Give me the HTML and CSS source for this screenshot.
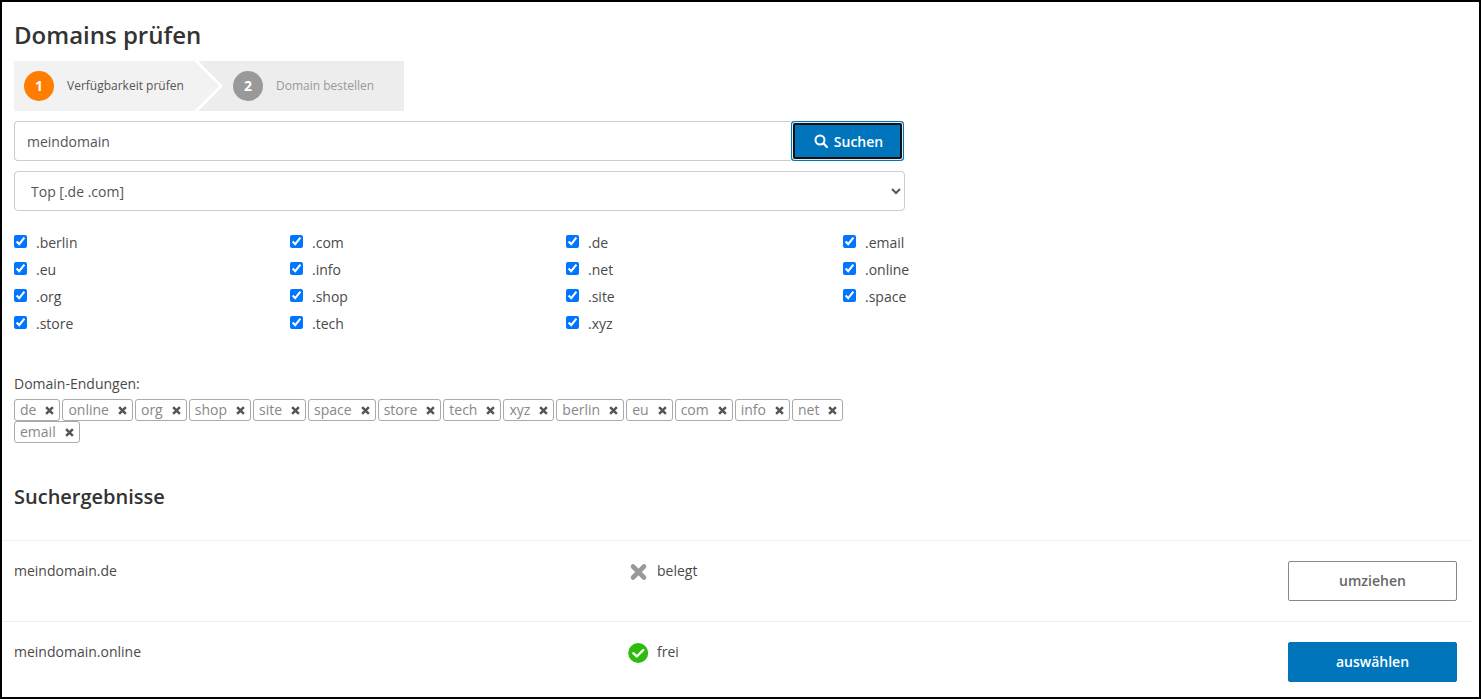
FILE: index.html
```html
<!DOCTYPE html>
<html lang="de">
<head>
<meta charset="utf-8">
<title>Domains prüfen</title>
<link rel="stylesheet" href="styles.css">
</head>
<body>
<main class="page">
  <div class="inner">
    <h1 class="title">Domains prüfen</h1>
    <div class="steps">
      <div class="step step-active"><span class="num num-orange">1</span><span class="step-label">Verfügbarkeit prüfen</span></div>
      <div class="step step-next"><span class="num num-grey">2</span><span class="step-label">Domain bestellen</span></div>
      <svg class="chevron" width="30" height="50" viewBox="0 0 30 50"><path d="M0 0 L25 25 L0 50 Z" fill="#f2f2f2"/><path d="M0 0 L4.500 0 L29 25 L4.500 50 L0 50 L25 25 Z" fill="#fff"/></svg>
    </div>
    <div class="search">
      <input class="search-input" type="text" value="meindomain">
      <button class="search-btn" type="button">
        <svg width="14" height="14" viewBox="0 0 14 14"><circle cx="6" cy="6" r="4.500" fill="none" stroke="#fff" stroke-width="2"/><path d="M9.300 9.300 L13 13" stroke="#fff" stroke-width="2.200" stroke-linecap="round"/></svg>
        Suchen
      </button>
    </div>
    <select class="tld-select"><option>Top [.de .com]</option></select>
    <div class="checks">
      <label class="check"><input type="checkbox" checked><span>.berlin</span></label>
      <label class="check"><input type="checkbox" checked><span>.com</span></label>
      <label class="check"><input type="checkbox" checked><span>.de</span></label>
      <label class="check"><input type="checkbox" checked><span>.email</span></label>
      <label class="check"><input type="checkbox" checked><span>.eu</span></label>
      <label class="check"><input type="checkbox" checked><span>.info</span></label>
      <label class="check"><input type="checkbox" checked><span>.net</span></label>
      <label class="check"><input type="checkbox" checked><span>.online</span></label>
      <label class="check"><input type="checkbox" checked><span>.org</span></label>
      <label class="check"><input type="checkbox" checked><span>.shop</span></label>
      <label class="check"><input type="checkbox" checked><span>.site</span></label>
      <label class="check"><input type="checkbox" checked><span>.space</span></label>
      <label class="check"><input type="checkbox" checked><span>.store</span></label>
      <label class="check"><input type="checkbox" checked><span>.tech</span></label>
      <label class="check"><input type="checkbox" checked><span>.xyz</span></label>
    </div>
    <div class="tags-label">Domain-Endungen:</div>
    <div class="tags">
      <span class="tag">de<svg class="x" viewBox="0 0 8 8"><path d="M1 1 L7 7 M7 1 L1 7"/></svg></span>
      <span class="tag">online<svg class="x" viewBox="0 0 8 8"><path d="M1 1 L7 7 M7 1 L1 7"/></svg></span>
      <span class="tag">org<svg class="x" viewBox="0 0 8 8"><path d="M1 1 L7 7 M7 1 L1 7"/></svg></span>
      <span class="tag">shop<svg class="x" viewBox="0 0 8 8"><path d="M1 1 L7 7 M7 1 L1 7"/></svg></span>
      <span class="tag">site<svg class="x" viewBox="0 0 8 8"><path d="M1 1 L7 7 M7 1 L1 7"/></svg></span>
      <span class="tag">space<svg class="x" viewBox="0 0 8 8"><path d="M1 1 L7 7 M7 1 L1 7"/></svg></span>
      <span class="tag">store<svg class="x" viewBox="0 0 8 8"><path d="M1 1 L7 7 M7 1 L1 7"/></svg></span>
      <span class="tag">tech<svg class="x" viewBox="0 0 8 8"><path d="M1 1 L7 7 M7 1 L1 7"/></svg></span>
      <span class="tag">xyz<svg class="x" viewBox="0 0 8 8"><path d="M1 1 L7 7 M7 1 L1 7"/></svg></span>
      <span class="tag">berlin<svg class="x" viewBox="0 0 8 8"><path d="M1 1 L7 7 M7 1 L1 7"/></svg></span>
      <span class="tag">eu<svg class="x" viewBox="0 0 8 8"><path d="M1 1 L7 7 M7 1 L1 7"/></svg></span>
      <span class="tag">com<svg class="x" viewBox="0 0 8 8"><path d="M1 1 L7 7 M7 1 L1 7"/></svg></span>
      <span class="tag">info<svg class="x" viewBox="0 0 8 8"><path d="M1 1 L7 7 M7 1 L1 7"/></svg></span>
      <span class="tag">net<svg class="x" viewBox="0 0 8 8"><path d="M1 1 L7 7 M7 1 L1 7"/></svg></span>
      <span class="tag">email<svg class="x" viewBox="0 0 8 8"><path d="M1 1 L7 7 M7 1 L1 7"/></svg></span>
    </div>
    <h2 class="subtitle">Suchergebnisse</h2>
  </div>
  <div class="results">
    <div class="row">
      <div class="domain">meindomain.de</div>
      <div class="status">
        <svg class="status-icon" width="22" height="22" viewBox="0 0 22 22"><path d="M5 5.500 L16 16.500 M16 5.500 L5 16.500" stroke="#999" stroke-width="4.600" stroke-linecap="round"/></svg>
        <span>belegt</span>
      </div>
      <button class="btn btn-outline" type="button">umziehen</button>
    </div>
    <div class="row">
      <div class="domain">meindomain.online</div>
      <div class="status">
        <svg class="status-icon" width="22" height="22" viewBox="0 0 22 22"><circle cx="10.200" cy="11" r="10" fill="#2dbb0e"/><path d="M5.300 11.200 L8.800 14.500 L15.300 8" fill="none" stroke="#fff" stroke-width="2.400" stroke-linecap="round" stroke-linejoin="round"/></svg>
        <span>frei</span>
      </div>
      <button class="btn btn-primary" type="button">auswählen</button>
    </div>
  </div>
</main>
</body>
</html>
```
FILE: styles.css
```css
* { box-sizing: border-box; }
html, body { margin: 0; padding: 0; background: #fff; }
body {
  font-family: "Open Sans", sans-serif;
  font-size: 14px;
  line-height: 20px;
  color: #4a4a4a;
  overflow: hidden;
}
.page {
  height: 699px;
  border: 2px solid #000;
  overflow: hidden;
}
.inner { padding: 0 12px; }
.title {
  margin: 0;
  padding-top: 17px;
  font-size: 24px;
  line-height: 32px;
  font-weight: 600;
  color: #333;
}
.steps {
  position: relative;
  display: flex;
  width: 390px;
  height: 50px;
  margin-top: 10px;
}
.step {
  display: flex;
  align-items: center;
  height: 50px;
  font-size: 12px;
}
.step-active { width: 180px; padding-left: 10px; background: #f2f2f2; color: #555; white-space: nowrap; }
.step-next { flex: 1; padding-left: 39px; background: #ededed; color: #999; }
.chevron { position: absolute; left: 179.500px; top: 0; }
.step-active .step-label, .step-active .num { position: relative; z-index: 1; }
.num {
  width: 30px;
  height: 30px;
  border-radius: 50%;
  display: flex;
  flex: none;
  align-items: center;
  justify-content: center;
  color: #fff;
  font-size: 14px;
  font-weight: 700;
  margin-right: 13px;
}
.num-orange { background: #ff7d00; }
.num-grey { background: #999; }
.search {
  display: flex;
  width: 890px;
  height: 40px;
  margin-top: 10px;
}
.search-input {
  flex: 1;
  min-width: 0;
  height: 40px;
  padding: 0 12px;
  border: 1px solid #ccc;
  border-right: 0;
  border-radius: 4px 0 0 4px;
  font: 14px "Open Sans", sans-serif;
  color: #555;
  outline: none;
}
.search-btn {
  width: 113px;
  height: 40px;
  display: flex;
  align-items: center;
  justify-content: center;
  gap: 6px;
  padding: 0 0 0 2px;
  background: #0075bc;
  color: #fff;
  font: 600 14px "Open Sans", sans-serif;
  border: 0;
  border-radius: 4px;
  box-shadow: inset 0 0 0 1px #0075bc, inset 0 0 0 2px #e3edf4, inset 0 0 0 4px #111;
}
.tld-select {
  display: block;
  width: 891px;
  height: 40px;
  margin-top: 10px;
  padding: 0 12px;
  border: 1px solid #ccc;
  border-radius: 4px;
  background: #fff;
  font: 14px "Open Sans", sans-serif;
  color: #555;
  outline: none;
}
.checks {
  display: grid;
  grid-template-columns: 276px 276px 277px 276px;
  grid-auto-rows: 27px;
  margin-top: 18px;
}
.check { display: flex; align-items: center; height: 27px; white-space: nowrap; }
.check input { width: 13px; height: 13px; margin: 0 9px 3px 0; flex: none; }
.tags-label { margin-top: 37px; }
.tags {
  display: flex;
  flex-wrap: wrap;
  gap: 0 2px;
  width: 890px;
  margin-top: 5px;
}
.tag {
  display: inline-flex;
  align-items: center;
  height: 22px;
  padding: 0 5px;
  border: 1px solid #aaa;
  border-radius: 3px;
  color: #888;
  white-space: nowrap;
}
.x {
  width: 9px;
  height: 9px;
  margin-left: 9px;
  fill: none;
  stroke: #555;
  stroke-width: 2.200;
}
.subtitle {
  margin: 40px 0 0;
  font-size: 20px;
  line-height: 28px;
  font-weight: 600;
  color: #333;
}
.results { margin-top: 29px; width: 1470px; }
.row {
  display: grid;
  grid-template-columns: 614px 1fr 169px;
  height: 81px;
  padding: 20px 15px 0 12px;
  border-top: 1px solid #eee;
}
.domain, .status { line-height: 20px; }
.status { display: flex; gap: 7px; }
.status-icon { flex: none; }
.status > span { display: block; }
.btn {
  width: 169px;
  height: 40px;
  border-radius: 2px;
  font: 600 14px "Open Sans", sans-serif;
  padding: 0 0 2px;
}
.btn-outline { background: #fff; border: 1px solid #888; color: #666; }
.btn-primary { background: #0075bc; border: 1px solid #0075bc; color: #fff; }
```
